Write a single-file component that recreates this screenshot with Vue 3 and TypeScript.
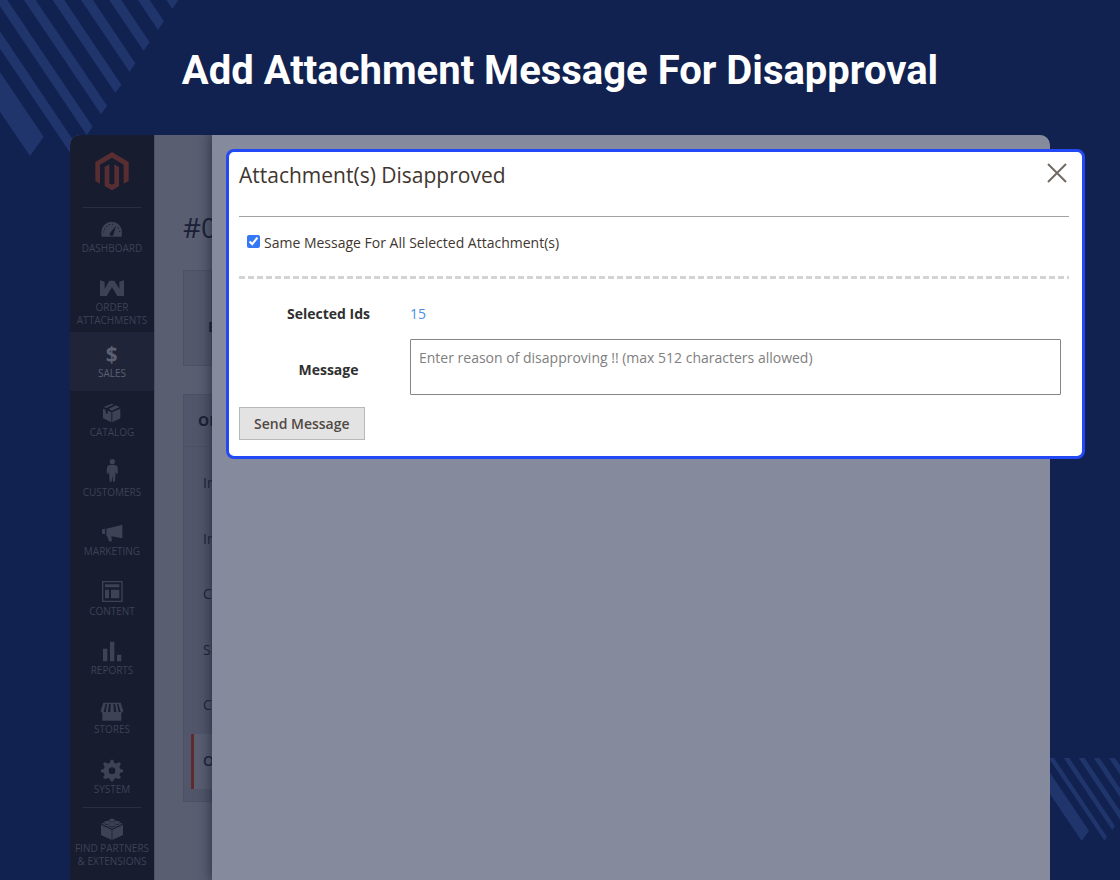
<script setup lang="ts">
import { ref } from 'vue'

interface NavItem {
  id: string
  lines: string[]
}

const topItems: NavItem[] = [
  { id: 'dashboard', lines: ['DASHBOARD'] },
  { id: 'order', lines: ['ORDER', 'ATTACHMENTS'] },
]

const mainItems: NavItem[] = [
  { id: 'sales', lines: ['SALES'] },
  { id: 'catalog', lines: ['CATALOG'] },
  { id: 'customers', lines: ['CUSTOMERS'] },
  { id: 'marketing', lines: ['MARKETING'] },
  { id: 'content', lines: ['CONTENT'] },
  { id: 'reports', lines: ['REPORTS'] },
  { id: 'stores', lines: ['STORES'] },
  { id: 'system', lines: ['SYSTEM'] },
]

const bottomItems: NavItem[] = [{ id: 'partners', lines: ['FIND PARTNERS', '& EXTENSIONS'] }]

const groups = [
  { name: 'top', items: topItems },
  { name: 'main', items: mainItems },
  { name: 'bottom', items: bottomItems },
]

const icons: Record<string, string> = {
  dashboard:
    '<path d="M5 56 L4 42 A31 31 0 0 1 66 42 L65 56Z"/><path class="cut" d="M48 23 L41 48 A6 6 0 1 1 32 43Z"/><g class="cut"><circle cx="11" cy="42" r="2"/><circle cx="14" cy="33" r="2"/><circle cx="20" cy="25" r="2"/><circle cx="28" cy="20" r="2"/><circle cx="37" cy="19" r="2"/><circle cx="55" cy="30" r="2"/><circle cx="59" cy="40" r="2"/></g>',
  order: '<path d="M0 10 L14 14 V36 L28 11 H43 L58 36 V14 L72 10 V57 H52 L36 31 L20 57 H0Z"/>',
  sales: '<text x="35" y="58" text-anchor="middle" font-family="Open Sans, sans-serif" font-weight="700" font-size="62">$</text>',
  catalog:
    '<path d="M35 5 L42 7 L19 18 L11 15Z"/><path d="M47 10 L59 15 L36 26 L26 21Z"/><path d="M9 20 L17 23 V33 L23 36 V26 L34 30 V61 L9 49Z"/><path d="M61 20 V49 L37 61 V30Z"/>',
  customers:
    '<circle cx="37" cy="-1" r="8"/><path d="M28 9 H46 Q51 10 53 16 L54 34 L49 36 L47 27 L45 59 H39 L37 40 L35 59 H29 L27 27 L25 36 L20 34 L21 16 Q23 10 28 9Z"/>',
  marketing: '<path d="M67 11 V52 L34 46 L36 60 L28 62 L21 45 H19 V23Z"/><path d="M6 25 L15 23 V40 L6 38Z"/>',
  content:
    '<path fill-rule="evenodd" d="M6 0 H68 V63 H6Z M10 4 V59 H64 V4Z"/><path d="M15 10 H58 V19 H15Z M15 26 H27 V52 H15Z M33 26 H58 V52 H33Z"/>',
  reports: '<path d="M9 26 H22 V64 H9Z M30 5 H43 V64 H30Z M51 44 H64 V64 H51Z"/>',
  stores:
    '<path d="M10 11 H62 L70 35 Q68 41 64 41 V65 H7 V41 Q3 41 2 35Z"/><path class="cut" d="M17 15 H21 L17 39 H11Z M27 15 H32 L31 39 H24Z M40 15 H45 L49 39 H42Z M51 15 H55 L62 39 H56Z"/>',
  system:
    '<path fill-rule="evenodd" d="M32 2 H40 L42 11 L49 14 L57 9 L63 15 L58 23 L61 30 L69 32 V39 L61 41 L58 48 L63 55 L57 61 L49 57 L42 60 L40 67 H32 L30 60 L23 57 L15 61 L9 55 L14 48 L11 41 L3 39 V32 L11 30 L14 23 L9 15 L15 9 L23 14 L30 11Z M36 25 A10 10 0 1 0 36 45 A10 10 0 1 0 36 25Z"/>',
  partners:
    '<path d="M3 20 L35 35 V66 L3 51Z M69 20 L37 35 V66 L69 51Z"/><path d="M4 17 L36 3 L68 17 L36 32Z"/><g class="cut"><path d="M27 7 a9 4 0 0 0 18 0 v2 a9 4 0 0 1 -18 0Z M12 14 a9 4 0 0 0 18 0 v2 a9 4 0 0 1 -18 0Z M42 14 a9 4 0 0 0 18 0 v2 a9 4 0 0 1 -18 0Z M27 21 a9 4 0 0 0 18 0 v2 a9 4 0 0 1 -18 0Z"/></g><g><ellipse cx="36" cy="6" rx="8" ry="4"/><ellipse cx="21" cy="13" rx="8" ry="4"/><ellipse cx="51" cy="13" rx="8" ry="4"/><ellipse cx="36" cy="20" rx="8" ry="4"/></g>',
}

const tabs = ['In', 'In', 'Cr', 'Sh', 'Co', 'Or']

const sameMessage = ref(true)
const message = ref('')
</script>

<template>
  <div class="page">
    <svg class="stripes stripes-top" viewBox="0 0 540 480" aria-hidden="true">
      <path
        d="M0 216 L131 410 L90 468 L0 335Z M0 94 L235 443 L217 468 L0 146Z M0 0 H22 L278 380 L260 405 L0 19Z M72 0 H107 L321 317 L303 343Z M158 0 H193 L364 254 L346 279Z M243 0 H279 L406 190 L389 216Z M328 0 H364 L449 127 L431 153Z M414 0 H449 L492 64 L474 90Z M499 0 H535 L517 27Z"
      />
    </svg>
    <svg class="stripes stripes-bottom" viewBox="150 54 210 249" aria-hidden="true">
      <path
        d="M77 54 H120 L267 272 L245 303Z M146 54 H162 L321 290 L314 303Z M191 54 H208 L345 258 L337 271Z M236 54 H254 L368 224 L360 239Z M281 54 H299 L391 191 L383 206Z M327 54 H345 L414 157 L406 172Z"
      />
    </svg>

    <header class="banner">
      <h1>Add Attachment Message For Disapproval</h1>
    </header>

    <div class="shell">
      <nav class="sidebar" aria-label="Admin">
        <a class="logo" href="#" aria-label="Home">
          <svg viewBox="0 0 102 116" aria-hidden="true">
            <path d="M51 0 L101 30 V87 L86 95 V38 L51 17 L15 38 V95 L1 87 V30Z" />
            <path d="M29 45 L43 37 V94 L51 98 L58 94 V37 L72 45 V102 L51 115 L29 102Z" />
          </svg>
        </a>
        <ul v-for="group in groups" :key="group.name" :class="['nav', 'nav-' + group.name]">
          <li v-for="item in group.items" :key="item.id">
            <a href="#" :class="['nav-item', { active: item.id === 'sales' }]">
              <svg viewBox="0 0 72 72" aria-hidden="true" v-html="icons[item.id]"></svg>
              <span v-for="line in item.lines" :key="line">{{ line }}</span>
            </a>
          </li>
        </ul>
      </nav>

      <main class="content">
        <h2>#00</h2>
        <section class="block"><strong>E</strong></section>
        <section class="tabs">
          <h3>OR</h3>
          <ul>
            <li v-for="(tab, i) in tabs" :key="i">
              <a href="#" :class="{ current: i === tabs.length - 1 }">{{ tab }}</a>
            </li>
          </ul>
        </section>
      </main>

      <div class="drawer"></div>
    </div>

    <div class="dialog" role="dialog" aria-labelledby="dialog-title">
      <div class="dialog-head">
        <h2 id="dialog-title">Attachment(s) Disapproved</h2>
        <button class="close" type="button" aria-label="Close">
          <svg viewBox="0 0 20 20" aria-hidden="true"><path d="M1 1 L19 19 M19 1 L1 19" /></svg>
        </button>
      </div>
      <label class="same">
        <input v-model="sameMessage" type="checkbox" />
        <span>Same Message For All Selected Attachment(s)</span>
      </label>
      <svg class="dashes" aria-hidden="true"><line x1="0" y1="50%" x2="100%" y2="50%" /></svg>
      <form class="form" @submit.prevent>
        <div class="row ids">
          <span class="name">Selected Ids</span>
          <a href="#">15</a>
        </div>
        <div class="row">
          <label class="name message-name" for="message">Message</label>
          <textarea
            id="message"
            v-model="message"
            placeholder="Enter reason of disapproving !! (max 512 characters allowed)"
          ></textarea>
        </div>
        <button class="send" type="submit">Send Message</button>
      </form>
    </div>
  </div>
</template>

<style>
body {
  margin: 0;
}
</style>

<style scoped>
.page {
  position: relative;
  display: flex;
  flex-direction: column;
  min-height: 100vh;
  overflow: hidden;
  background: #112150;
  font-family: 'Open Sans', 'Noto Sans', sans-serif;
}
.page * {
  box-sizing: border-box;
}
.stripes {
  position: absolute;
  fill: #20356c;
}
.stripes-top {
  top: 0;
  left: 0;
  width: 180px;
}
.stripes-bottom {
  right: 0;
  bottom: 39px;
  width: 70px;
}
.banner {
  position: relative;
  height: 135px;
  padding-top: 47px;
  text-align: center;
}
h1 {
  margin: 0;
  color: #fff;
  font: 700 40px/48px Roboto, sans-serif;
}
h2,
h3,
ul {
  margin: 0;
  padding: 0;
  list-style: none;
}
a {
  text-decoration: none;
}
.shell {
  position: relative;
  display: flex;
  flex: 1;
  margin: 0 70px;
  overflow: hidden;
  border-radius: 10px 10px 0 0;
  background: #595e71;
}
.sidebar {
  width: 84px;
  background: #171c2e;
}
.logo {
  display: flex;
  align-items: center;
  justify-content: center;
  height: 72px;
}
.logo svg {
  width: 34px;
  fill: #582e33;
}
.nav {
  position: relative;
  display: grid;
}
.nav-top::before,
.nav-bottom::before {
  content: '';
  position: absolute;
  top: 0;
  left: 13px;
  right: 13px;
  border-top: 1px solid #292e40;
}
.nav-top {
  grid-template-rows: 59px 66px;
}
.nav-main {
  grid-auto-rows: 1fr;
  min-height: 475px;
}
.nav-item {
  display: flex;
  flex-direction: column;
  align-items: center;
  height: 100%;
  padding-top: 11px;
  color: #3d4255;
  font-size: 10px;
  line-height: 13px;
  white-space: nowrap;
}
.nav-item svg {
  width: 24px;
  height: 24px;
  flex: none;
  overflow: visible;
  fill: currentColor;
}
.nav-item :deep(.cut) {
  fill: #171c2e;
}
.nav-item.active {
  background: #1f2439;
  color: #5c6072;
}
.content {
  width: 58px;
  padding-left: 28px;
  overflow: hidden;
  border-left: 1px solid #4b5063;
  color: #1b2037;
  white-space: nowrap;
}
.content h2 {
  padding-top: 72px;
  font-size: 28px;
  font-weight: 400;
  line-height: 40px;
}
.block {
  height: 96px;
  margin-top: 23px;
  padding: 46px 0 0 24px;
  border: 1px solid #4c5164;
  background: #53586b;
  font-size: 14px;
  line-height: 20px;
}
.tabs {
  margin-top: 28px;
  padding-bottom: 12px;
  border: 1px solid #4c5164;
  background: #51566a;
}
.tabs h3 {
  padding: 15px 0 15px 14px;
  border-bottom: 1px solid #4b5063;
  font-size: 14px;
  font-weight: 700;
  line-height: 21px;
}
.tabs ul {
  display: grid;
  grid-auto-rows: 1fr;
  min-height: 342px;
  padding: 9px 0 0 7px;
}
.tabs a {
  display: block;
  height: 100%;
  padding: 17px 0 0 12px;
  color: #1e2339;
  font-size: 14px;
  line-height: 20px;
}
.tabs a.current {
  padding-left: 9px;
  border-left: 3px solid #612a2c;
  background: #595e71;
  font-weight: 600;
}
.drawer {
  flex: 1;
  background: #868a9d;
  box-shadow: 0 0 12px 2px rgba(23, 28, 46, 0.6);
}
.dialog {
  position: absolute;
  top: 149px;
  left: 226px;
  right: 35px;
  padding: 10px 13px 16px 10px;
  border: 3px solid #2249f5;
  border-radius: 8px;
  background: #fff;
  color: #41362f;
}
.dialog-head {
  display: flex;
  align-items: flex-start;
  justify-content: space-between;
  height: 55px;
  border-bottom: 1px solid #a3a3a3;
}
.dialog-head h2 {
  font-size: 21px;
  font-weight: 400;
  line-height: 26px;
}
.close {
  display: flex;
  margin-right: 2px;
  padding: 1px 0 0;
  border: 0;
  background: none;
}
.close svg {
  width: 20px;
  height: 20px;
  fill: none;
  stroke: #736963;
  stroke-width: 2;
}
.same {
  display: flex;
  align-items: center;
  gap: 4px;
  width: max-content;
  margin: 16px 0 0 8px;
  font-size: 14px;
  line-height: 20px;
}
.same input {
  width: 13px;
  height: 13px;
  margin: 0 0 3px;
  accent-color: #3478f6;
}
.dashes {
  display: block;
  width: 100%;
  height: 3px;
  margin-top: 23px;
}
.dashes line {
  stroke: #d3d3d3;
  stroke-width: 3;
  stroke-dasharray: 6 3;
}
.form {
  padding-top: 25px;
}
.row {
  display: grid;
  grid-template-columns: 163px 1fr;
  align-items: center;
  margin: 0 8px;
  font-size: 14px;
  line-height: 20px;
}
.ids {
  margin-bottom: 15px;
}
.name {
  color: #303030;
  font-weight: 700;
  text-align: center;
}
.message-name {
  padding-top: 6px;
}
.row a {
  color: #4a8fe2;
}
textarea {
  display: block;
  width: 100%;
  height: 56px;
  padding: 8px;
  border: 1px solid #858585;
  border-radius: 1px;
  background: #fff;
  color: #303030;
  font: 14px/20px 'Open Sans', 'Noto Sans', sans-serif;
  resize: none;
}
textarea::placeholder {
  color: #808080;
}
.send {
  display: block;
  height: 33px;
  margin-top: 12px;
  padding: 0 14px;
  border: 1px solid #b8b8b8;
  background: #e3e3e3;
  color: #514943;
  font: 600 14px/20px 'Open Sans', 'Noto Sans', sans-serif;
}
</style>
